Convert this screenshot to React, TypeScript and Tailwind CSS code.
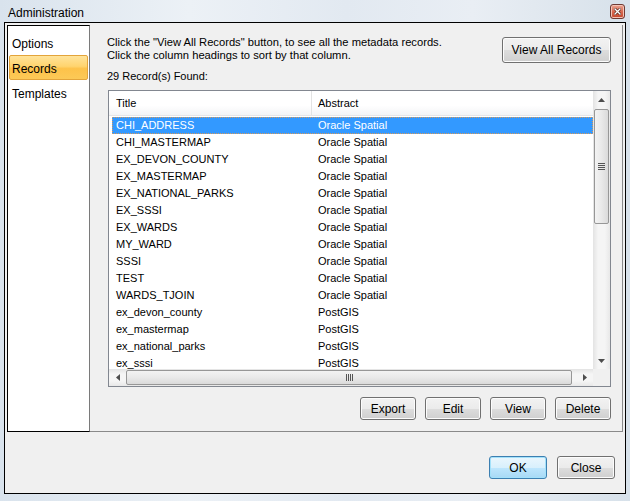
import React from "react"

const ROWS: [string, string][] = [
  ["CHI_ADDRESS", "Oracle Spatial"],
  ["CHI_MASTERMAP", "Oracle Spatial"],
  ["EX_DEVON_COUNTY", "Oracle Spatial"],
  ["EX_MASTERMAP", "Oracle Spatial"],
  ["EX_NATIONAL_PARKS", "Oracle Spatial"],
  ["EX_SSSI", "Oracle Spatial"],
  ["EX_WARDS", "Oracle Spatial"],
  ["MY_WARD", "Oracle Spatial"],
  ["SSSI", "Oracle Spatial"],
  ["TEST", "Oracle Spatial"],
  ["WARDS_TJOIN", "Oracle Spatial"],
  ["ex_devon_county", "PostGIS"],
  ["ex_mastermap", "PostGIS"],
  ["ex_national_parks", "PostGIS"],
  ["ex_sssi", "PostGIS"],
]

function WinButton({ label, className = "", isDefault = false }: { label: string; className?: string; isDefault?: boolean }) {
  return (
    <button
      className={
        "flex items-center justify-center rounded-[3px] border text-[11px] text-black " +
        (isDefault
          ? "border-[#3c7fb1] bg-[linear-gradient(#eaf6fd_0%,#d9f0fc_50%,#bee6fd_51%,#a7d9f5_100%)] shadow-[inset_0_0_0_1px_#a3e1fa] "
          : "border-[#707070] bg-[linear-gradient(#f2f2f2_0%,#ebebeb_50%,#dddddd_51%,#cfcfcf_100%)] shadow-[inset_0_0_0_1px_#fcfcfc] ") +
        className
      }
    >
      {label}
    </button>
  )
}

function Arrow({ dir }: { dir: "up" | "down" | "left" | "right" }) {
  const pts = {
    up: "0,4 7,4 3.5,0",
    down: "0,0 7,0 3.5,4",
    left: "4,0 4,7 0,3.5",
    right: "0,0 0,7 4,3.5",
  }[dir]
  const vertical = dir === "up" || dir === "down"
  return (
    <svg width={vertical ? 7 : 4} height={vertical ? 4 : 7} viewBox={vertical ? "0 0 7 4" : "0 0 4 7"}>
      <polygon points={pts} fill="#4d4d4d" />
    </svg>
  )
}

function VScroll() {
  return (
    <div className="flex h-full flex-col bg-[linear-gradient(90deg,#e3e3e3,#f5f5f5_30%,#f5f5f5_70%,#e8e8e8)]">
      <div className="flex h-[17px] items-center justify-center">
        <Arrow dir="up" />
      </div>
      <div className="relative flex-1">
        <div className="absolute left-px right-px top-[1px] h-[115px] rounded-[2px] border border-[#979797] bg-[linear-gradient(90deg,#f3f3f3,#e9e9e9_50%,#dadada)] flex flex-col items-center justify-center gap-[1px]">
          <div className="h-px w-[7px] bg-[#555]" />
          <div className="h-px w-[7px] bg-[#555]" />
          <div className="h-px w-[7px] bg-[#555]" />
          <div className="h-px w-[7px] bg-[#555]" />
        </div>
      </div>
      <div className="flex h-[17px] items-center justify-center">
        <Arrow dir="down" />
      </div>
    </div>
  )
}

function HScroll() {
  return (
    <div className="flex h-full bg-[linear-gradient(#e3e3e3,#f5f5f5_30%,#f5f5f5_70%,#e8e8e8)]">
      <div className="flex w-[17px] items-center justify-center">
        <Arrow dir="left" />
      </div>
      <div className="flex flex-1 py-px pr-[4px]">
        <div className="flex flex-1 items-center justify-center gap-[1px] rounded-[2px] border border-[#979797] bg-[linear-gradient(#f3f3f3,#e9e9e9_50%,#dadada)]">
          <div className="h-[7px] w-px bg-[#555]" />
          <div className="h-[7px] w-px bg-[#555]" />
          <div className="h-[7px] w-px bg-[#555]" />
          <div className="h-[7px] w-px bg-[#555]" />
        </div>
      </div>
      <div className="flex w-[17px] items-center justify-center">
        <Arrow dir="right" />
      </div>
    </div>
  )
}

function RecordList() {
  return (
    <div className="ml-px grid h-[297px] grid-cols-[1fr_17px] grid-rows-[1fr_17px] border border-[#828790] bg-white">
      <div className="overflow-hidden">
        <div className="flex h-[25px] border-b border-[#e5e5e5] bg-[linear-gradient(#ffffff_0%,#ffffff_60%,#f3f4f6_100%)]">
          <div className="flex w-[203px] items-center border-r border-[#e3e3e3] pl-[7px] pt-px">Title</div>
          <div className="flex flex-1 items-center pl-[6px] pt-px">Abstract</div>
        </div>
        <div className="pl-[3px] pt-px">
          {ROWS.map(([title, abs], i) => (
            <div
              key={title}
              className={
                "flex h-[17px] items-center " +
                (i === 0 ? "border border-dotted border-[#d89a5a] bg-[#3399ff] text-white" : "border border-transparent")
              }
            >
              <div className="w-[202px] pl-[3px]">{title}</div>
              <div className="pl-[3px]">{abs}</div>
            </div>
          ))}
        </div>
      </div>
      <VScroll />
      <HScroll />
      <div className="bg-[#f0f0f0]" />
    </div>
  )
}

export default function App() {
  return (
    <div className="flex h-[501px] w-[630px] flex-col bg-[linear-gradient(90deg,#d9e3ed_0%,#ecf1f6_30%,#e2e9f1_55%,#e9eef4_75%,#d7e1ea_100%)] font-['Liberation_Sans',Arial,sans-serif] text-[11px] text-black">
      <div className="flex h-[22px] items-center justify-between pl-[8px] pr-[5px]">
        <span className="pt-[3px] text-[12px] leading-none text-black">Administration</span>
        <div className="flex h-[15px] w-[15px] items-center justify-center rounded-[3px] border border-[#6f3b34] bg-[linear-gradient(#eba592,#d86a52_50%,#c4452b)] shadow-[inset_0_0_0_1px_#f4c3b6]">
          <svg width="7" height="7" viewBox="0 0 7 7">
            <path d="M1 1 L6 6 M6 1 L1 6" stroke="#4a1a10" strokeWidth="2.6" strokeLinecap="square" />
            <path d="M1 1 L6 6 M6 1 L1 6" stroke="#ffffff" strokeWidth="1.4" strokeLinecap="square" />
          </svg>
        </div>
      </div>

      <div className="mx-[4px] flex h-[472px] flex-col border border-black bg-[#f0f0f0] p-[2px]">
        <div className="flex h-[407px]">
          <div className="w-[83px] border-y border-l border-r border-black border-r-[#7a7a7a] bg-white pt-[4px] text-[12px]">
            <div className="mx-px flex h-[25px] items-center pl-[3px] pt-[2px]">Options</div>
            <div className="mx-px flex h-[25px] items-center rounded-[2px] border border-[#e3a43a] bg-[linear-gradient(#ffe39a,#ffd46e_45%,#fdc24a_55%,#fcc957)] pl-[2px] pt-[3px]">
              Records
            </div>
            <div className="mx-px flex h-[25px] items-center pl-[3px] pt-[3px]">Templates</div>
          </div>

          <div className="flex flex-1 flex-col border-r border-b border-[#8a8a8a] pl-[17px] pr-[11px] pt-[11px]">
            <div className="flex h-[27px] justify-between">
              <div className="text-[11.2px] leading-[13px]">
                <div>Click the "View All Records" button, to see all the metadata records.</div>
                <div>Click the column headings to sort by that column.</div>
              </div>
              <WinButton label="View All Records" className="mt-px h-[26px] w-[109px] text-[12px]" />
            </div>
            <div className="mt-[7px] leading-[13px]">29 Record(s) Found:</div>
            <div className="mt-[7px]">
              <RecordList />
            </div>
            <div className="mt-[10px] flex justify-end gap-[9px]">
              <WinButton label="Export" className="h-[23px] w-[56px] text-[12px]" />
              <WinButton label="Edit" className="h-[23px] w-[56px] text-[12px]" />
              <WinButton label="View" className="h-[23px] w-[56px] text-[12px]" />
              <WinButton label="Delete" className="h-[23px] w-[56px] text-[12px]" />
            </div>
          </div>
        </div>

        <div className="flex flex-1 items-start justify-end gap-[10px] pr-[8px] pt-[24px]">
          <WinButton label="OK" isDefault className="h-[23px] w-[58px] text-[12px]" />
          <WinButton label="Close" className="h-[23px] w-[58px] text-[12px]" />
        </div>
      </div>
    </div>
  )
}
